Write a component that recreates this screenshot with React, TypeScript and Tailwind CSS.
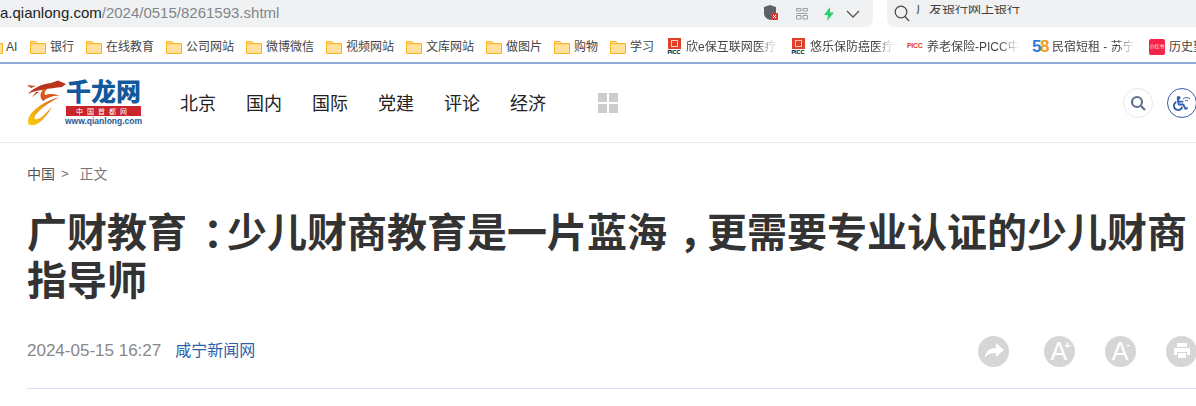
import React from "react";
import { FaWheelchair } from "react-icons/fa";

const cjk = "font-['Liberation_Sans','Noto_Sans_CJK_SC',sans-serif]";
const fade = "[mask-image:linear-gradient(to_right,black_78%,transparent)]";

function Folder() {
  return (
    <svg width="16" height="14" viewBox="0 0 16 14" className="shrink-0">
      <path d="M.5 1.500h5.500l1.500 2h8v10H.5z" fill="#ffe09c" stroke="#f8b320" />
      <path d="M.5 3.700h15" stroke="#f8b320" />
    </svg>
  );
}

function Picc() {
  return (
    <span className="flex w-4 shrink-0 flex-col items-center">
      <span className="flex h-[11px] w-[13px] items-center justify-center bg-[#e0402a]">
        <span className="h-[7px] w-[7px] border border-[#f8c8b8]" />
      </span>
      <span className="mt-[1px] font-['Liberation_Sans'] text-[5.500px] leading-[5px] font-bold text-black">PICC</span>
    </span>
  );
}

function Mark({ label, width }: { label: string; width: string }) {
  return (
    <div className={`flex shrink-0 items-center gap-[4px] ${width}`}>
      <Folder />
      <span className="text-[12px] leading-[16px] whitespace-nowrap text-[#444]">{label}</span>
    </div>
  );
}

function RoundIcon({ children, className = "" }: { children: React.ReactNode; className?: string }) {
  return <div className={`flex h-[31px] w-[31px] shrink-0 items-center justify-center rounded-full bg-[#d6d6d6] ${className}`}>{children}</div>;
}

export default function App() {
  return (
    <div className={`h-[406px] w-[1196px] overflow-hidden bg-white ${cjk}`}>
      <div className="flex h-[27px] items-start justify-between">
        <div className="flex h-[27px] w-[873px] items-center overflow-hidden rounded-br-lg bg-[#eff1f3]">
          <div className="w-[761px] shrink-0 pb-[1px] text-[15px] whitespace-nowrap text-[#222]">
            a.qianlong.com<span className="text-[#80868b]">/2024/0515/8261593.shtml</span>
          </div>
          <svg width="16" height="18" viewBox="0 0 16 18" className="mb-[1px] ml-[2px] shrink-0">
            <path d="M1 3l6-2 6 2v6c0 4-3 6-6 7-3-1-6-3-6-7z" fill="#5f6368" />
            <rect x="8" y="9" width="7" height="7" fill="#d93a32" />
            <path d="M10 11l3 3m0-3l-3 3" stroke="#fff" />
          </svg>
          <svg width="12" height="12" viewBox="0 0 12 12" className="ml-[17px] shrink-0" fill="none" stroke="#9aa0a6">
            <path d="M.5.5h4.500v2.500h-4.500zM7 .5h4.500v2.500H7zM.5 5.500h11M.5 7.500h4.500v3.500h-4.500zM7 7.500h4.500v3.500H7z" />
          </svg>
          <svg width="12" height="14" viewBox="0 0 12 14" className="ml-[15px] shrink-0">
            <path d="M7 0L1 8h4l-1 6 7-8.500H7z" fill="#28d16e" />
          </svg>
          <svg width="14" height="8" viewBox="0 0 14 8" className="ml-[11px] shrink-0" fill="none" stroke="#555" strokeWidth="1.300">
            <path d="M1 1l6 6 6-6" />
          </svg>
        </div>
        <div className="flex h-[27px] w-[309px] items-center rounded-bl-lg bg-[#eff1f3] pl-[7px]">
          <svg width="16" height="17" viewBox="0 0 16 17" fill="none" stroke="#444" strokeWidth="1.200" className="shrink-0">
            <circle cx="7" cy="7" r="5.800" />
            <path d="M11 11.500l4 4.500" />
          </svg>
          <div className="mt-[5px] ml-[6px] h-[9px] overflow-hidden self-start">
            <div className="mt-[-3px] text-[13px] leading-[13px] whitespace-nowrap text-[#444]">广发银行网上银行</div>
          </div>
        </div>
      </div>

      <div className="mt-[6px] flex h-[29px] items-center overflow-hidden pb-[2px]">
        <div className="ml-[-13px] w-[19px] shrink-0">
          <Folder />
        </div>
        <span className="w-[24px] shrink-0 text-[12px] text-[#444]">AI</span>
        <Mark label="银行" width="w-[56px]" />
        <Mark label="在线教育" width="w-[80px]" />
        <Mark label="公司网站" width="w-[80px]" />
        <Mark label="微博微信" width="w-[80px]" />
        <Mark label="视频网站" width="w-[80px]" />
        <Mark label="文库网站" width="w-[80px]" />
        <Mark label="做图片" width="w-[68px]" />
        <Mark label="购物" width="w-[56px]" />
        <Mark label="学习" width="w-[56px]" />
        <div className="flex w-[124px] shrink-0 items-center gap-[4px]">
          <Picc />
          <span className={`w-[91px] overflow-hidden text-[12px] whitespace-nowrap text-[#444] ${fade}`}>欣e保互联网医疗</span>
        </div>
        <div className="flex w-[117px] shrink-0 items-center gap-[4px]">
          <Picc />
          <span className={`w-[84px] overflow-hidden text-[12px] whitespace-nowrap text-[#444] ${fade}`}>悠乐保防癌医疗</span>
        </div>
        <div className="flex w-[125px] shrink-0 items-center gap-[4px]">
          <span className="w-[16px] font-['Liberation_Sans'] text-[7px] font-black tracking-[-0.3px] text-[#e0401c]">PICC</span>
          <span className={`w-[92px] overflow-hidden text-[12px] whitespace-nowrap text-[#444] ${fade}`}>养老保险-PICC中</span>
        </div>
        <div className="flex w-[117px] shrink-0 items-center gap-[4px]">
          <span className="w-[16px] font-['Liberation_Sans'] text-[17px] leading-[16px] font-bold tracking-[-1.500px] text-[#f39a1e]">
            <span className="text-[#2a7de1]">5</span>8
          </span>
          <span className={`w-[83px] overflow-hidden text-[12px] whitespace-nowrap text-[#444] ${fade}`}>民宿短租 - 苏宁</span>
        </div>
        <div className="flex shrink-0 items-center gap-[4px]">
          <span className="flex h-[16px] w-[16px] items-center justify-center rounded-[2px] bg-[#f5224a] text-[5px] whitespace-nowrap text-white">小红书</span>
          <span className="text-[12px] whitespace-nowrap text-[#444]">历史望</span>
        </div>
      </div>

      <div className="h-[2px] bg-[#8fabd3]" />

      <header className="flex h-[79px] items-center border-b border-[#e8e8e8] pl-[27px]">
        <div className="flex h-[48px] w-[114px] shrink-0 items-start">
          <svg width="39" height="46" viewBox="0 0 39 46" className="mt-[1px] shrink-0">
            <defs>
              <linearGradient id="d" x1="0" y1="1" x2="1" y2="0">
                <stop offset="0" stopColor="#f8cc10" />
                <stop offset="0.55" stopColor="#ec9a1a" />
                <stop offset="1" stopColor="#c0401a" />
              </linearGradient>
            </defs>
            <path d="M39 4L31 0.500 L24 3C15 4 6 8 1 14C7 11 12 10 16 10C22 8 30 8 35 7Z" fill="#b8341c" />
            <path d="M17 9C12 13 13 18 16 21C21 17 28 15 33 16C26 13 21 14 18 15C17 13 18 11 20 9Z" fill="#d8581c" />
            <path d="M4 8L0 5L9 6ZM5 17L9 12L12 12Z" fill="#c84a1c" />
            <path d="M33 17C20 20 2 30 1 41C0 47 8 46 13 42C18 38 22 32 25 27C18 34 12 41 8 39C5 37 16 25 33 17Z" fill="url(#d)" />
          </svg>
          <div className="flex w-[75px] shrink-0 flex-col items-center">
            <div className="text-[25px] leading-[26px] font-black whitespace-nowrap text-[#12589c]">千龙网</div>
            <div className="mt-[1px] flex h-[10px] w-[75px] items-center justify-center bg-[#c9252b] text-[7px] leading-none tracking-[4px] text-white">中国首都网</div>
            <div className="h-[10px] font-['Liberation_Sans'] text-[8.500px] leading-[11px] font-bold whitespace-nowrap text-[#1d5a96]">www.qianlong.com</div>
          </div>
        </div>
        <nav className="mt-[1px] ml-[39px] flex gap-[30px] text-[18px] leading-[24px] text-[#222]">
          <span>北京</span>
          <span>国内</span>
          <span>国际</span>
          <span>党建</span>
          <span>评论</span>
          <span>经济</span>
        </nav>
        <div className="ml-[52px] grid grid-cols-2 gap-[2px]">
          <span className="h-[9px] w-[9px] bg-[#cccccc]" />
          <span className="h-[9px] w-[9px] bg-[#cccccc]" />
          <span className="h-[9px] w-[9px] bg-[#cccccc]" />
          <span className="h-[9px] w-[9px] bg-[#cccccc]" />
        </div>
        <div className="mr-[-1px] ml-auto flex shrink-0 items-center gap-[14px]">
          <div className="flex h-[30px] w-[30px] items-center justify-center rounded-full border border-[#e6e9f0]">
            <svg width="16" height="16" viewBox="0 0 16 16" fill="none" stroke="#60708a" strokeWidth="2.200">
              <circle cx="7" cy="7" r="5" />
              <path d="M11 11l4 4" />
            </svg>
          </div>
          <div className="relative flex h-[30px] w-[30px] items-center justify-center rounded-full border border-[#3a5da8]">
            <FaWheelchair className="ml-[-3px] text-[15px] text-[#2f5fae]" />
            <svg width="9" height="7" viewBox="0 0 9 7" fill="none" stroke="#2f5fae" className="absolute top-[7px] right-[5px]">
              <path d="M1 3a5 5 0 0 1 7 0M3 5a2.500 2.500 0 0 1 3 0" />
            </svg>
          </div>
        </div>
      </header>

      <main className="pl-[27px]">
        <div className="mt-[22px] flex items-center text-[14px] leading-[18px] text-[#555]">
          <span>中国</span>
          <span className="ml-[6px] text-[13px] text-[#777]">&gt;</span>
          <span className="ml-[11px] text-[#777]">正文</span>
        </div>
        <h1 className="mt-[26px] w-[1165px] text-[40px] leading-[48px] font-bold text-[#333]">
          广财教育<span className="inline-block translate-x-[16px]">：</span>少儿财商教育是一片蓝海<span className="inline-block translate-x-[12px]">，</span>更需要专业认证的少儿财商指导师
        </h1>
        <div className="mt-[27px] flex h-[38px] items-center">
          <span className="font-['Liberation_Sans'] text-[17px] text-[#888]">2024-05-15 16:27</span>
          <span className="ml-[14px] text-[16px] text-[#2c5fa8]">咸宁新闻网</span>
          <RoundIcon className="ml-auto">
            <svg width="20" height="16" viewBox="0 0 20 16"><path d="M12 0l8 7-8 7v-4C7 10 3 11 1 15c0-6 4-10 11-10z" fill="#fff" /></svg>
          </RoundIcon>
          <RoundIcon className="ml-[35px]">
            <span className="ml-[2px] font-['Liberation_Sans'] text-[25px] leading-none text-white">A</span>
            <span className="mb-[12px] ml-[-3px] font-['Liberation_Sans'] text-[11px] leading-none font-bold text-white">+</span>
          </RoundIcon>
          <RoundIcon className="ml-[30px]">
            <span className="ml-[1px] font-['Liberation_Sans'] text-[25px] leading-none text-white">A</span>
            <span className="mb-[14px] ml-[-2px] font-['Liberation_Sans'] text-[11px] leading-none font-bold text-white">-</span>
          </RoundIcon>
          <RoundIcon className="mr-[-1px] ml-[30px]">
            <svg width="18" height="16" viewBox="0 0 18 16">
              <path d="M4 0h10v4H4zM1 5h16v7h-3V9H4v3H1zM5 10h8v5H5z" fill="#fff" />
            </svg>
          </RoundIcon>
        </div>
        <div className="mt-[18px] h-px bg-[#d5e0f0]" />
      </main>
    </div>
  );
}
